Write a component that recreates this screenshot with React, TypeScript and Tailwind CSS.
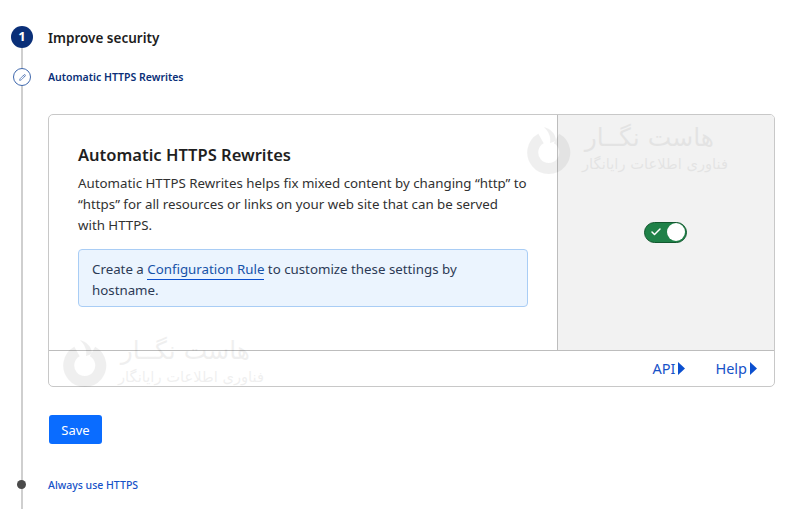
import { Check, Pencil } from "lucide-react";

function Watermark({ className }: { className: string }) {
  return (
    <div className={`pointer-events-none absolute flex items-center gap-[11px] opacity-[0.07] ${className}`}>
      <svg width="44" height="48" viewBox="0 0 44 48" fill="none">
        <path d="M14 12.5A16 16 0 1 0 29.5 12.5" stroke="#333" strokeWidth="11" />
        <path d="M17 1C24 3 29 8 29 15L23 17C24 11 22 6 17 1Z" fill="#333" />
      </svg>
      <div dir="rtl" className="flex flex-col items-start font-['DejaVu_Sans',sans-serif] text-[#333]">
        <span className="mr-[14px] text-[25px] leading-[28px]">هاست نگــار</span>
        <span className="text-[14.7px] leading-[24px]">فناوری اطلاعات رایانگار</span>
      </div>
    </div>
  );
}

function ArrowLink({ label }: { label: string }) {
  return (
    <a className="flex items-center gap-[3px] text-[14.5px] text-[#1652c8]">
      {label}
      <svg width="7" height="13" viewBox="0 0 7 13">
        <path d="M0 0L7 6.5L0 13Z" fill="#0b4fcf" />
      </svg>
    </a>
  );
}

export default function App() {
  return (
    <div className="relative h-[509px] w-[790px] overflow-hidden bg-white font-['Noto_Sans',sans-serif] text-[#313131]">
      <div className="flex h-[48px] items-end gap-[15px] pl-[11px]">
        <div className="flex h-[22px] w-[22px] items-center justify-center rounded-full bg-[#0a2f78] text-[13px] font-bold text-white">
          1
        </div>
        <h2 className="h-[22px] pt-[1px] text-[13.5px] font-semibold leading-[22px] text-[#1d1d1d]">Improve security</h2>
      </div>

      <div className="relative ml-[21px] h-[461px] border-l-2 border-[#cfcfcf] pl-[25px] pt-[22px]">
        <div className="absolute left-[-10px] top-[20px] flex h-[18px] w-[18px] items-center justify-center rounded-full border border-[#3f68ad] bg-white">
          <Pencil size={7} strokeWidth={2.5} className="text-[#3f68ad]" />
        </div>
        <a className="block text-[10.5px] font-semibold leading-[14px] text-[#0a2f78]">
          Automatic HTTPS Rewrites
        </a>

        <div className="mt-[30px] w-[727px] overflow-hidden rounded-[5px] border border-[#c8c8c8]">
          <div className="flex h-[235px]">
            <div className="w-[509px] border-r border-[#bdbdbd] pl-[29px] pr-[29px] pt-[29px]">
              <h3 className="text-[16.5px] font-semibold leading-[22px] text-[#1f1f1f]">Automatic HTTPS Rewrites</h3>
              <p className="mt-[7px] text-[13.3px] leading-[21px]">
                Automatic HTTPS Rewrites helps fix mixed content by changing “http” to “https” for all resources or links on your web site that can be served with HTTPS.
              </p>
              <div className="mt-[13px] h-[58px] rounded-[4px] border border-[#a9cdf5] bg-[#ebf4fe] px-[13px] pt-[9px] text-[13.3px] leading-[21px] text-[#2b3a55]">
                Create a <a className="border-b border-[#0b4fcf] pb-[1px] text-[#1652a8]">Configuration Rule</a> to customize these settings by hostname.
              </div>
            </div>
            <div className="flex flex-1 items-center justify-center bg-[#f2f2f2] pb-[1px] pr-[2px]">
              <div className="flex h-[21px] w-[43px] items-center justify-between rounded-full border border-[#13582f] bg-[#1f8148] pl-[5px] pr-[1px]">
                <Check size={12} strokeWidth={3} className="text-white" />
                <div className="h-[18px] w-[18px] rounded-full bg-white" />
              </div>
            </div>
          </div>
          <div className="flex h-[36px] items-center justify-end gap-[30px] border-t border-[#bdbdbd] pr-[17px]">
            <ArrowLink label="API" />
            <ArrowLink label="Help" />
          </div>
        </div>

        <button className="ml-[1px] mt-[28px] block h-[29px] w-[53px] rounded-[3px] bg-[#0a6cff] pt-[2px] text-[13px] text-white">
          Save
        </button>

        <div className="absolute left-[-6px] top-[432px] h-[9px] w-[9px] rounded-full bg-[#4a4a4a]" />
        <a className="mt-[34px] block text-[10.5px] font-medium leading-[14px] text-[#1652c8]">Always use HTTPS</a>
      </div>

      <Watermark className="left-[527px] top-[124px]" />
      <Watermark className="left-[63px] top-[337px]" />
    </div>
  );
}
